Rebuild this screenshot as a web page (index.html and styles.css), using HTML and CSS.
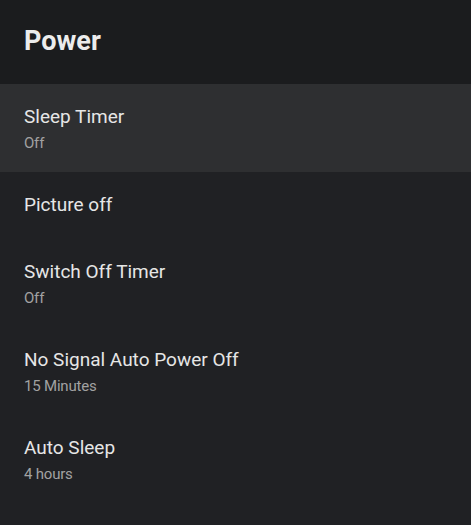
FILE: index.html
```html
<!DOCTYPE html>
<html>
<head>
<meta charset="utf-8">
<link rel="stylesheet" href="styles.css">
</head>
<body>
<div class="panel">
  <header class="header">
    <h1 class="header__title">Power</h1>
  </header>
  <ul class="list">
    <li class="row row--focused">
      <div class="row__title">Sleep Timer</div>
      <div class="row__sub">Off</div>
    </li>
    <li class="row row--single">
      <div class="row__title">Picture off</div>
    </li>
    <li class="row">
      <div class="row__title">Switch Off Timer</div>
      <div class="row__sub">Off</div>
    </li>
    <li class="row">
      <div class="row__title">No Signal Auto Power Off</div>
      <div class="row__sub">15 Minutes</div>
    </li>
    <li class="row">
      <div class="row__title">Auto Sleep</div>
      <div class="row__sub">4 hours</div>
    </li>
  </ul>
</div>
</body>
</html>
```
FILE: styles.css
```css
html, body {
  margin: 0;
  padding: 0;
  background: #202124;
  font-family: Roboto, "Noto Sans", sans-serif;
}
.panel {
  width: 471px;
  height: 525px;
  background: #202124;
  overflow: hidden;
}
.header {
  height: 84px;
  box-sizing: border-box;
  padding: 25px 24px 0;
  background: #1b1c1e;
}
.header__title {
  margin: 0;
  font-size: 27px;
  line-height: 32px;
  font-weight: 700;
  color: #ececec;
}
.list {
  list-style: none;
  margin: 0;
  padding: 0;
}
.row {
  padding: 21px 24px 19px;
}
.row--single {
  padding-bottom: 22px;
}
.row--focused {
  background: #2e2f31;
}
.row__title {
  font-size: 19px;
  line-height: 24px;
  color: #e6e6e6;
}
.row__sub {
  margin-top: 4px;
  font-size: 15px;
  line-height: 20px;
  color: #a2a2a2;
  letter-spacing: -0.2px;
}
```
